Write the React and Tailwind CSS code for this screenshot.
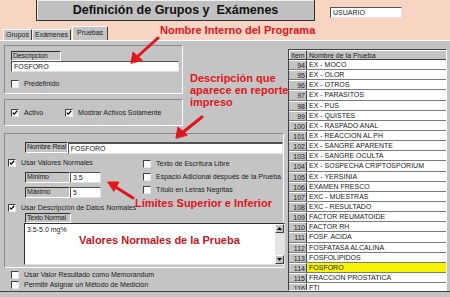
const rows = [
  [94, 'EX - MOCO'],
  [95, 'EX - OLOR'],
  [96, 'EX - OTROS'],
  [97, 'EX - PARASITOS'],
  [98, 'EX - PUS'],
  [99, 'EX - QUISTES'],
  [100, 'EX - RASPADO ANAL'],
  [101, 'EX - REACCION AL PH'],
  [102, 'EX - SANGRE APARENTE'],
  [103, 'EX - SANGRE OCULTA'],
  [104, 'EX - SOSPECHA CRIPTOSPORIUM'],
  [105, 'EX - YERSINIA'],
  [106, 'EXAMEN FRESCO'],
  [107, 'EXC - MUESTRAS'],
  [108, 'EXC - RESULTADO'],
  [109, 'FACTOR REUMATOIDE'],
  [110, 'FACTOR RH'],
  [111, 'FOSF. ACIDA'],
  [112, 'FOSFATASA ALCALINA'],
  [113, 'FOSFOLIPIDOS'],
  [114, 'FOSFORO'],
  [115, 'FRACCION PROSTATICA'],
  [116, 'FTI'],
]

const Check = ({ checked }) => (
  <span className="relative w-[8px] h-[8px] shrink-0 bg-white border border-t-[#404040] border-l-[#404040] border-b-[#e8e8e8] border-r-[#e8e8e8]">
    {checked && (
      <svg viewBox="0 0 8 8" className="absolute left-0 top-0 w-[6px] h-[6px]">
        <path d="M1 3.5 L3 5.5 L7 1" stroke="#000" strokeWidth="1.6" fill="none" />
      </svg>
    )}
  </span>
)

const CheckRow = ({ checked, label, className = '' }) => (
  <div className={`flex items-center gap-[5px] h-[9px] whitespace-nowrap ${className}`}>
    <Check checked={checked} />
    <span className="leading-none">{label}</span>
  </div>
)

const Label = ({ children, className = '' }) => (
  <div className={`h-[10px] px-[1px] leading-[8px] whitespace-nowrap overflow-hidden tracking-[-0.2px] bg-[#c4c4c4] border border-t-[#303030] border-l-[#303030] border-b-white border-r-white ${className}`}>
    {children}
  </div>
)

const Input = ({ value, className = '' }) => (
  <div className={`h-[11px] px-[2px] leading-[9px] whitespace-nowrap bg-white border border-t-[#505050] border-l-[#505050] border-b-[#e0e0e0] border-r-[#e0e0e0] ${className}`}>
    {value}
  </div>
)

const Frame = ({ className = '', children }) => (
  <div className={`border border-t-[#8a8a8a] border-l-[#8a8a8a] border-b-white border-r-white ${className}`}>
    {children}
  </div>
)

export default function App() {
  return (
    <div className="relative w-[450px] h-[297px] overflow-hidden bg-[#c4c4c4] text-[7px] text-[#202020] font-['Liberation_Sans',Arial,sans-serif]">
      <div className="bg-[#f8d4c2] h-[40px] flex flex-col">
        <div className="flex h-[26px]">
          <div className="ml-[36px] w-[279px] h-[21px] bg-[#c0c0c0] border border-[#303030] border-t-0 shadow-[inset_1px_1px_0_#f0f0f0] flex items-center justify-center">
            <span className="text-[12.5px] font-bold text-[#101010] whitespace-nowrap">Definición de Grupos y&nbsp; Exámenes</span>
          </div>
          <Input value="USUARIO" className="ml-[15px] mt-[7px] w-[72px]" />
        </div>
        <div className="flex items-end h-[14px] pl-[3px]">
          <div className="h-[11px] px-[2px] border border-b-0 border-t-white border-l-white border-r-[#404040] bg-[#c4c4c4] leading-[10px]">Grupos</div>
          <div className="h-[11px] px-[2px] border border-b-0 border-t-white border-l-white border-r-[#404040] bg-[#c4c4c4] leading-[10px]">Exámenes</div>
          <div className="h-[14px] px-[4px] ml-[1px] border border-b-0 border-t-white border-l-white border-r-[#404040] bg-[#c4c4c4] leading-[12px]">Pruebas</div>
        </div>
      </div>

      <div className="flex h-[252px] border-t border-white border-b border-b-[#404040]">
        <div className="w-[286px] flex flex-col pl-[4px] pt-[4px]">
          <Frame className="w-[179px] h-[49px] px-[6px] pt-[5px]">
            <Label className="w-[50px]">Descripcion</Label>
            <Input value="FOSFORO" className="w-[168px]" />
            <CheckRow label="Predefinido" className="mt-[7px]" />
          </Frame>
          <Frame className="w-[179px] h-[27px] mt-[5px] px-[6px] flex items-center gap-[22px]">
            <CheckRow checked label="Activo" />
            <CheckRow checked label="Mostrar Activos Solamente" />
          </Frame>
          <Frame className="w-[280px] h-[135px] mt-[7px] pl-[3px] pt-[8px]">
            <div className="flex pl-[17px]">
              <Label className="w-[43px] h-[11px]">Nombre Real</Label>
              <Input value="FOSFORO" className="w-[216px] h-[12px] border-t-2 border-t-[#303030]" />
            </div>
            <div className="flex mt-[4px]">
              <div className="w-[135px] flex flex-col">
                <CheckRow checked label="Usar Valores Normales" />
                <div className="flex mt-[5px] pl-[17px]">
                  <Label className="w-[45px] h-[11px]">Mínimo</Label>
                  <Input value="3.5" className="w-[31px] h-[11px]" />
                </div>
                <div className="flex mt-[4px] pl-[17px]">
                  <Label className="w-[45px] h-[11px]">Máximo</Label>
                  <Input value="5" className="w-[31px] h-[11px]" />
                </div>
              </div>
              <div className="flex flex-col gap-[4px] mt-[1px]">
                <CheckRow label="Texto de Escritura Libre" />
                <CheckRow label="Espacio Adicional después de la Prueba" />
                <CheckRow label="Título en Letras Negritas" />
              </div>
            </div>
            <CheckRow checked label="Usar Descripción de Datos Normales" className="mt-[5px]" />
            <Label className="ml-[17px] w-[46px] mt-[1px]">Texto Normal</Label>
            <div className="ml-[16px] w-[261px] h-[42px] flex bg-white border border-t-[#303030] border-l-[#303030] border-b-[#e0e0e0] border-r-[#e0e0e0]">
              <div className="flex-1 pl-[2px] pt-[1px]">3.5-5.0 mg%</div>
              <div className="w-[9px] flex flex-col justify-between bg-[#e4e4e4]">
                <div className="h-[9px] bg-[#c4c4c4] border border-t-white border-l-white border-b-[#404040] border-r-[#404040] flex items-center justify-center">
                  <svg viewBox="0 0 5 3" className="w-[5px] h-[3px]"><path d="M2.5 0 L5 3 L0 3 Z" fill="#000" /></svg>
                </div>
                <div className="h-[9px] bg-[#c4c4c4] border border-t-white border-l-white border-b-[#404040] border-r-[#404040] flex items-center justify-center">
                  <svg viewBox="0 0 5 3" className="w-[5px] h-[3px]"><path d="M0 0 L5 0 L2.5 3 Z" fill="#000" /></svg>
                </div>
              </div>
            </div>
          </Frame>
          <div className="pl-[7px] mt-[2px] flex flex-col gap-[1px]">
            <CheckRow label="Usar Valor Resultado como Memorandum" />
            <CheckRow label="Permitir Asignar un Método de Medición" />
          </div>
        </div>

        <div className="ml-[2px] mt-[8px] w-[159px] h-[242px] overflow-hidden bg-white border border-t-[#404040] border-l-[#404040] border-b-white border-r-white">
          <div className="flex h-[10px] bg-[#c4c4c4] border-b border-[#404040]">
            <div className="w-[18px] px-[1px] leading-[9px] border-r border-[#404040] border-t border-t-white border-l border-l-white">Item</div>
            <div className="flex-1 px-[2px] leading-[9px] border-t border-t-white">Nombre de la Prueba</div>
          </div>
          {rows.map(([n, name]) => (
            <div key={n} className="flex h-[10.15px] border-b border-[#7a7a7a]">
              <div className="w-[18px] pr-[1px] text-right leading-[9px] bg-[#c4c4c4] border-r border-[#404040] border-t border-t-white">{n}</div>
              <div className={`flex-1 px-[2px] leading-[9px] whitespace-nowrap ${n === 114 ? 'bg-[#f8f400]' : ''}`}>{name}</div>
            </div>
          ))}
        </div>
      </div>

      <div className="absolute left-[160px] top-[25px] text-[11px] font-bold text-[#e2141c] leading-none whitespace-nowrap">Nombre Interno del Programa</div>
      <div className="absolute left-[190px] top-[72px] text-[11px] font-bold text-[#e2141c] leading-[12px] whitespace-nowrap">
        Descripción que<br />aparece en reporte<br />impreso
      </div>
      <div className="absolute left-[135px] top-[198px] text-[11px] font-bold text-[#e2141c] leading-none whitespace-nowrap">Límites Superior e Inferior</div>
      <div className="absolute left-[79px] top-[235px] text-[11px] font-bold text-[#c8141c] leading-none whitespace-nowrap">Valores Normales de la Prueba</div>

      <svg className="absolute inset-0 pointer-events-none" width="450" height="297" viewBox="0 0 450 297">
        <g stroke="#e2141c" strokeWidth="3" fill="#e2141c" strokeLinecap="round">
          <line x1="158" y1="38" x2="137" y2="57" />
          <path d="M131 63 L133 52 L142 60 Z" strokeWidth="1" />
          <line x1="202" y1="117" x2="182" y2="133" />
          <path d="M176 138 L178 127 L187 135 Z" strokeWidth="1" />
          <line x1="133" y1="198" x2="114" y2="186" />
          <path d="M108 182 L119 182 L114 191 Z" strokeWidth="1" />
        </g>
      </svg>
    </div>
  )
}
